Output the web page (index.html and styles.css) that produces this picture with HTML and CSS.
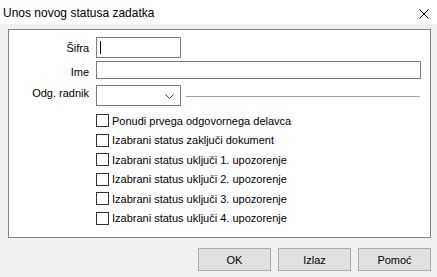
FILE: index.html
```html
<!DOCTYPE html>
<html lang="sr">
<head>
    <meta charset="UTF-8">
    <meta name="viewport" content="width=device-width, initial-scale=1.0">
    <title>Unos novog statusa zadatka</title>
    <link rel="stylesheet" href="styles.css">
</head>
<body>
  <div class="titlebar">
      <span class="title">Unos novog statusa zadatka</span>
      <svg class="close" width="10" height="10" viewBox="0 0 10 10">
          <path d="M0.5 0.5 L9.5 9.5 M9.5 0.5 L0.5 9.5" stroke="#000" stroke-width="1" fill="none"/>
      </svg>
  </div>

  <div class="client">
      <div class="panel">
          <div class="field">
              <label>Šifra</label>
              <div class="edit short sifra"><span class="caret"></span></div>
          </div>
          <div class="field">
              <label class="low">Ime</label>
              <div class="edit wide ime"></div>
          </div>
          <div class="field">
              <label>Odg. radnik</label>
              <div class="edit short combo">
                  <svg class="chevron" width="9" height="5" viewBox="0 0 9 5">
                      <path d="M0.5 0.5 L4.5 4.5 L8.5 0.5" stroke="#444" stroke-width="1" fill="none"/>
                  </svg>
              </div>
              <div class="name-line"></div>
          </div>

          <!-- opcije statusa -->
          <div class="checks">
              <div class="check"><span class="box"></span>Ponudi prvega odgovornega delavca</div>
              <div class="check"><span class="box"></span>Izabrani status zaključi dokument</div>
              <div class="check"><span class="box"></span>Izabrani status uključi 1. upozorenje</div>
              <div class="check"><span class="box"></span>Izabrani status uključi 2. upozorenje</div>
              <div class="check"><span class="box"></span>Izabrani status uključi 3. upozorenje</div>
              <div class="check"><span class="box"></span>Izabrani status uključi 4. upozorenje</div>
          </div>
      </div>

      <div class="buttons">
          <button type="button">OK</button>
          <button type="button">Izlaz</button>
          <button type="button">Pomoć</button>
      </div>
  </div>
</body>
</html>
```

FILE: styles.css
```css
body {
    margin: 0;
    padding: 0;
    font-family: "Liberation Sans", Arial, sans-serif;
    font-size: 11px;
    color: #000;
    background-color: #f0f0f0;
}
.titlebar {
    height: 24px;
    background-color: #fff;
    display: flex;
    align-items: center;
    justify-content: space-between;
    padding: 0 8px 0 3px;
}
.title {
    font-size: 12px;
    margin-top: 1px;
}
.close {
    margin-top: 4px;
}
.client {
    height: 253px;
    box-sizing: border-box;
    padding: 5px 6px 0 8px;
}
.panel {
    height: 209px;
    box-sizing: border-box;
    background-color: #fff;
    border: 1px solid #828282;
    padding: 7px 9px 0 0;
}
.field {
    display: flex;
    align-items: center;
    gap: 7px;
}
.field label {
    width: 80px;
    text-align: right;
    padding-top: 1px;
}
.field label.low {
    padding-top: 6px;
}
.edit {
    box-sizing: border-box;
    border: 1px solid #7a7a7a;
    background-color: #fff;
    position: relative;
}
.short {
    width: 85px;
}
.wide {
    flex: 1;
}
.sifra {
    height: 21px;
}
.ime {
    height: 18px;
    margin-top: 3px;
}
.combo {
    height: 21px;
    margin-top: 6px;
}
.caret {
    position: absolute;
    left: 3px;
    top: 3px;
    width: 1px;
    height: 13px;
    background-color: #000;
}
.chevron {
    position: absolute;
    right: 6px;
    top: 8px;
}
.name-line {
    flex: 1;
    height: 1px;
    background-color: #a0a0a0;
    margin: 7px 1px 0 -2px;
}
.checks {
    margin: 5px 0 0 87px;
}
.check {
    height: 19.5px;
    display: flex;
    align-items: center;
}
.box {
    width: 13px;
    height: 13px;
    box-sizing: border-box;
    border: 1px solid #333;
    margin-right: 3px;
}
.buttons {
    display: flex;
    justify-content: flex-end;
    gap: 7px;
    margin-top: 10px;
}
button {
    width: 73px;
    height: 23px;
    font-family: "Liberation Sans", Arial, sans-serif;
    font-size: 11px;
    color: #000;
    background-color: #e1e1e1;
    border: 1px solid #adadad;
    border-radius: 0;
    padding: 0;
}
```
